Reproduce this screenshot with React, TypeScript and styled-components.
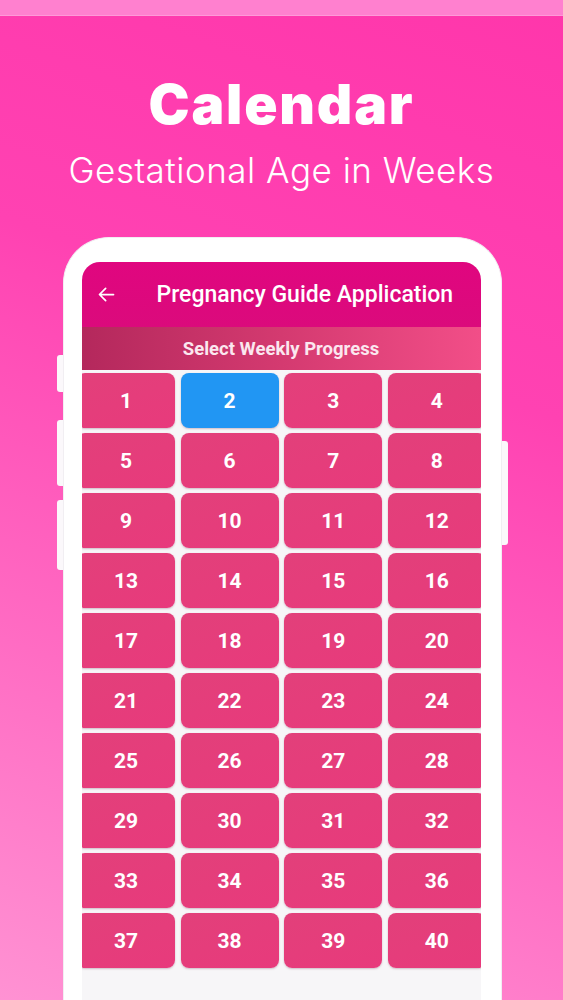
import styled, { createGlobalStyle } from 'styled-components';

const GlobalStyle = createGlobalStyle`
    html, body {
        margin: 0;
        padding: 0;
        overflow: hidden;
    }
    * {
        box-sizing: border-box;
    }
`;

const weeks = [...Array(40).keys()].map((key) => key + 1);
const selectedWeek = 2;

const App = () => {
    return (
        <>
            <GlobalStyle />
            <Page>
                <StatusStrip />
                <Heading>Calendar</Heading>
                <SubHeading>Gestational Age in Weeks</SubHeading>
                <Phone>
                    <SideButton side='left' top={117} height={37} />
                    <SideButton side='left' top={182} height={66} />
                    <SideButton side='left' top={262} height={70} />
                    <SideButton side='right' top={203} height={104} />
                    <Screen>
                        <AppBar>
                            <BackButton aria-label='back'>
                                <svg width='21' height='21' viewBox='0 0 24 24' fill='none'>
                                    <path
                                        d='M20 12H5M11 5l-7 7 7 7'
                                        stroke='#fff'
                                        strokeWidth='2'
                                        strokeLinecap='round'
                                        strokeLinejoin='round'
                                    />
                                </svg>
                            </BackButton>
                            <AppTitle>Pregnancy Guide Application</AppTitle>
                        </AppBar>
                        <SectionBar>Select Weekly Progress</SectionBar>
                        <WeekGrid>
                            {weeks.map((week) => (
                                <WeekCell key={week} $active={week === selectedWeek}>
                                    {week}
                                </WeekCell>
                            ))}
                        </WeekGrid>
                    </Screen>
                </Phone>
            </Page>
        </>
    );
};

const Page = styled.div`
    width: 563px;
    height: 1000px;
    display: flex;
    flex-direction: column;
    align-items: center;
    overflow: hidden;
    background: linear-gradient(200deg, #ff36ab 0%, #ff42b2 35%, #ff6cc3 70%, #ff92d3 100%);
`;

const StatusStrip = styled.div`
    width: 100%;
    height: 16px;
    flex-shrink: 0;
    background: #ff80cf;
    border-bottom: 1px solid #ff9ad8;
`;

const Heading = styled.h1`
    margin: 58px 0 0;
    font-family: 'Inter', 'Open Sans', sans-serif;
    font-weight: 900;
    font-size: 55px;
    line-height: 60px;
    color: #fff;
    letter-spacing: 1.8px;
`;

const SubHeading = styled.div`
    margin-top: 16px;
    font-family: 'Inter', 'Open Sans', sans-serif;
    font-weight: 300;
    font-size: 35px;
    line-height: 40px;
    color: #fff;
    letter-spacing: 0.5px;
`;

const Phone = styled.div`
    position: relative;
    flex: 1;
    width: 439px;
    margin-top: 47px;
    margin-left: 1px;
    padding: 24px 20px 0 18px;
    background: #fff;
    border: 1px solid #f1eef2;
    border-bottom: none;
    border-radius: 46px 46px 0 0;
    display: flex;
    flex-direction: column;
`;

const SideButton = styled.div<{ side: 'left' | 'right'; top: number; height: number }>`
    position: absolute;
    top: ${(p) => p.top}px;
    ${(p) => (p.side === 'left' ? 'left: -7px;' : 'right: -7px;')}
    width: 6px;
    height: ${(p) => p.height}px;
    background: #fbf8fb;
    border-radius: ${(p) => (p.side === 'left' ? '3px 0 0 3px' : '0 3px 3px 0')};
`;

const Screen = styled.div`
    flex: 1;
    border-radius: 18px 18px 0 0;
    overflow: hidden;
    background: #f7f6f8;
    display: flex;
    flex-direction: column;
`;

const AppBar = styled.div`
    height: 65px;
    flex-shrink: 0;
    display: flex;
    align-items: center;
    padding-left: 14px;
    background: linear-gradient(180deg, #e0067f 0%, #db0a7c 100%);
`;

const BackButton = styled.div`
    width: 22px;
    height: 22px;
    display: flex;
    align-items: center;
    justify-content: center;
`;

const AppTitle = styled.div`
    margin-left: 39px;
    font-family: 'Roboto', 'Liberation Sans', sans-serif;
    font-weight: 500;
    font-size: 23px;
    color: #fff;
`;

const SectionBar = styled.div`
    height: 43px;
    flex-shrink: 0;
    display: flex;
    align-items: center;
    justify-content: center;
    background: linear-gradient(90deg, #b4285c 0%, #d43a70 50%, #f24e88 100%);
    font-family: 'Roboto', 'Liberation Sans', sans-serif;
    font-weight: 700;
    font-size: 18.5px;
    color: #fbe7ef;
`;

const WeekGrid = styled.div`
    width: 409px;
    margin-left: -4.5px;
    padding-top: 3px;
    display: grid;
    grid-template-columns: repeat(4, 98px);
    grid-auto-rows: 55px;
    column-gap: 5.6px;
    row-gap: 5px;
`;

const WeekCell = styled.div<{ $active: boolean }>`
    display: flex;
    align-items: center;
    justify-content: center;
    border-radius: 8px;
    background: ${(p) => (p.$active ? '#2196f3' : 'linear-gradient(160deg, #e2407a 0%, #e83a7c 100%)')};
    box-shadow: 0 1px 2px rgba(90, 20, 50, 0.25);
    font-family: 'Roboto', 'Liberation Sans', sans-serif;
    font-weight: 700;
    font-size: 21px;
    color: #fff;
`;

export default App;
